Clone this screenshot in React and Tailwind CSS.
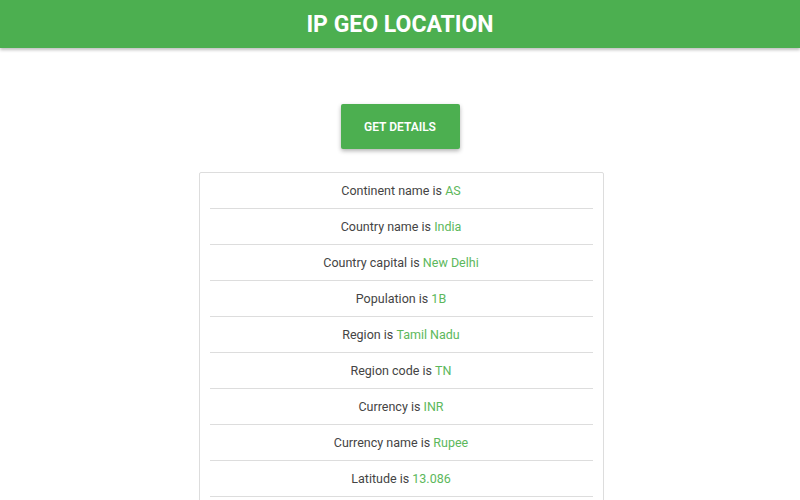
import React from 'react';

const rows = [
  ['Continent name is', 'AS'],
  ['Country name is', 'India'],
  ['Country capital is', 'New Delhi'],
  ['Population is', '1B'],
  ['Region is', 'Tamil Nadu'],
  ['Region code is', 'TN'],
  ['Currency is', 'INR'],
  ['Currency name is', 'Rupee'],
  ['Latitude is', '13.086'],
  ['Longitude is', '80.2707'],
];

export default function App() {
  return (
    <div className="min-h-screen bg-white" style={{ fontFamily: 'Roboto, "Liberation Sans", sans-serif' }}>
      <header className="h-[48px] bg-[#4caf50] flex items-center justify-center shadow-[0_2px_3px_rgba(0,0,0,0.25)]">
        <h1 className="text-white text-[23px] font-bold leading-none">IP GEO LOCATION</h1>
      </header>

      <div className="flex justify-center pt-[56px]">
        <button className="w-[119px] h-[45px] bg-[#4caf50] text-white text-[12px] font-semibold rounded-[2px] shadow-[0_2px_4px_rgba(0,0,0,0.3)]">
          GET DETAILS
        </button>
      </div>

      <div className="flex justify-center mt-[23px] pl-[2px]">
        <div className="w-[405px] border border-[#ddd] rounded-[2px] px-[10px]">
          {rows.map(([label, value], idx) => (
            <div key={idx} className="h-[36px] pt-[2px] border-b border-[#ddd] flex items-center justify-center text-[12.5px] text-[#444]">
              {label}&nbsp;<span className="text-[#5cb85c]">{value}</span>
            </div>
          ))}
        </div>
      </div>
    </div>
  );
}
